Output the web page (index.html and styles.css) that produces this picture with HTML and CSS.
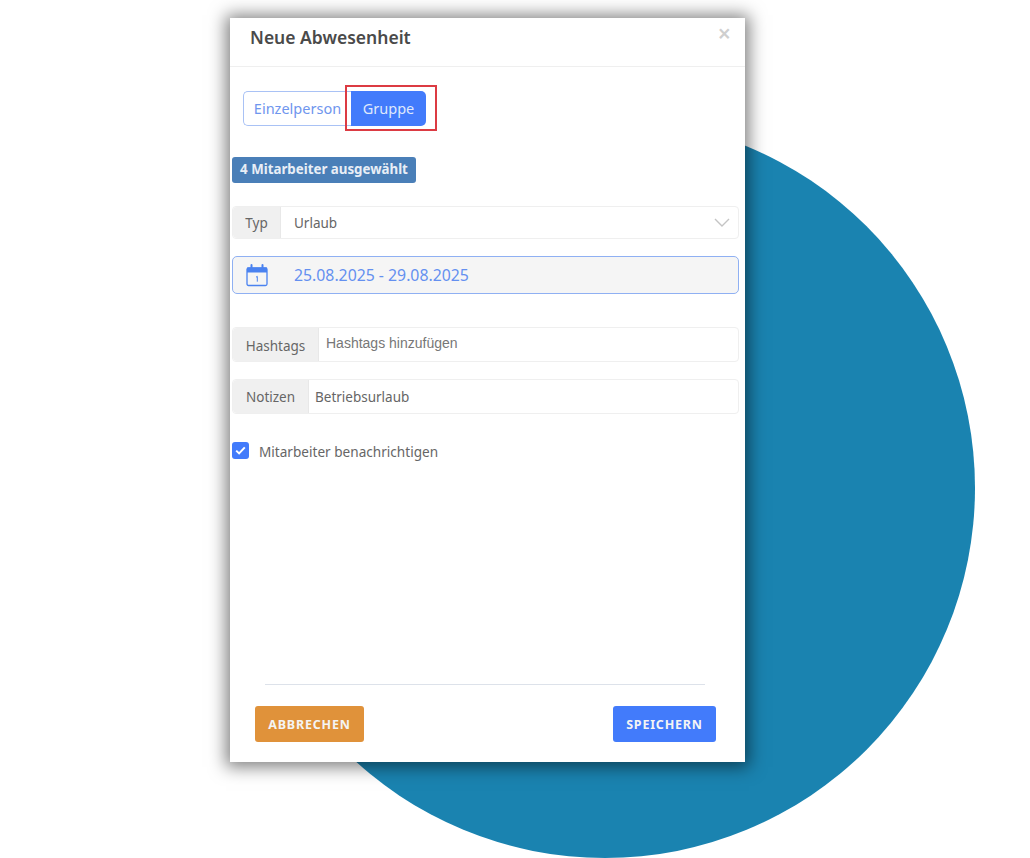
FILE: index.html

```html
<!DOCTYPE html>
<html lang="de">
<head>
    <meta charset="UTF-8">
    <title>Neue Abwesenheit</title>
    <link rel="stylesheet" href="styles.css">
</head>
<body>
    <div class="circle"></div>

    <div class="modal">
        <div class="modal-header">
            <h2>Neue Abwesenheit</h2>
            <span class="close">&times;</span>
        </div>

        <div class="modal-body">
            <div class="switch">
                <button class="switch-btn">Einzelperson</button>
                <button class="switch-btn active">Gruppe</button>
                <span class="highlight"></span>
            </div>

            <div class="badge">4 Mitarbeiter ausgewählt</div>

            <div class="field field-typ">
                <span class="addon addon-typ">Typ</span>
                <span class="value">Urlaub</span>
                <svg class="chevron" width="16" height="9" viewBox="0 0 16 9"><path d="M1 1l7 7 7-7" fill="none" stroke="#c4c4c4" stroke-width="1.4"/></svg>
            </div>

            <div class="date-field">
                <svg class="cal" width="22" height="23" viewBox="0 0 22 23">
                    <path d="M1 3.500h20v5H1z" fill="#4a82f0"/>
                    <rect x="1" y="4" width="20" height="17.500" rx="1.500" fill="none" stroke="#4a82f0" stroke-width="1.300"/>
                    <path d="M5.500 1v4M16.500 1v4" stroke="#4a82f0" stroke-width="2" stroke-linecap="round"/>
                    <path d="M10 13.200l1.300-.8v5.300" fill="none" stroke="#4a82f0" stroke-width="1"/>
                </svg>
                <span class="dates">25.08.2025 - 29.08.2025</span>
            </div>

            <div class="field field-tags">
                <span class="addon addon-tags">Hashtags</span>
                <span class="placeholder">Hashtags hinzufügen</span>
            </div>

            <div class="field field-notes">
                <span class="addon addon-notes">Notizen</span>
                <span class="value-notes">Betriebsurlaub</span>
            </div>

            <div class="check-row">
                <span class="check">
                    <svg width="11" height="9" viewBox="0 0 11 9"><path d="M1.200 4.600l2.900 2.800 5.700-6" fill="none" stroke="#fff" stroke-width="2"/></svg>
                </span>
                <span class="check-label">Mitarbeiter benachrichtigen</span>
            </div>
        </div>

        <div class="modal-footer">
            <button class="btn btn-cancel">ABBRECHEN</button>
            <button class="btn btn-save">SPEICHERN</button>
        </div>
    </div>
</body>
</html>
```

FILE: styles.css

```css
html, body {
    height: 100%;
}

body {
    margin: 0;
    background-color: #fff;
    font-family: "Noto Sans", Arial, sans-serif;
    color: #555;
    overflow: hidden;
    position: relative;
    display: flex;
    flex-direction: column;
    align-items: flex-start;
    padding: 18px 0 0 230px;
    box-sizing: border-box;
}

.circle {
    position: absolute;
    left: 235px;
    top: 118px;
    width: 740px;
    height: 740px;
    border-radius: 50%;
    background-color: #1a83b0;
}

.modal {
    position: relative;
    width: 515px;
    height: 744px;
    background-color: #fff;
    box-shadow: 0 1px 16px 4px rgba(0, 0, 0, 0.5);
    display: flex;
    flex-direction: column;
}

.modal-header {
    height: 48px;
    border-bottom: 1px solid #efefef;
    position: relative;
    padding-left: 20px;
}

.modal-header h2 {
    margin: 0;
    padding-top: 7px;
    font-size: 17.500px;
    line-height: 24px;
    font-weight: 600;
    color: #4a4a4a;
}

.close {
    position: absolute;
    right: 14px;
    top: 3px;
    font-size: 23px;
    line-height: 24px;
    font-weight: 600;
    color: #cfcfcf;
}

.modal-body {
    flex: 1;
    padding: 24px 6px 0 2px;
}

.switch {
    display: flex;
    position: relative;
    margin-left: 11px;
    height: 35px;
}

.switch-btn {
    font-family: inherit;
    font-size: 14.500px;
    color: #6f96ee;
    background-color: #fff;
    border: 1px solid #a9c2f5;
    border-radius: 5px 0 0 5px;
    border-right: none;
    width: 108px;
    padding: 0 0 2px;
}

.switch-btn.active {
    width: 75px;
    color: #dfe8fb;
    background-color: #427bfb;
    border: none;
    border-radius: 0 5px 5px 0;
}

.highlight {
    position: absolute;
    left: 102px;
    top: -6px;
    width: 88px;
    height: 42px;
    border: 2px solid #dc3b43;
}

.badge {
    display: inline-block;
    margin-top: 31px;
    height: 26px;
    line-height: 25px;
    width: 184px;
    text-align: center;
    font-size: 13.300px;
    font-weight: 700;
    color: #e8eef6;
    background-color: #4a7fb8;
    border-radius: 3px;
}

.field {
    display: flex;
    align-items: center;
    border: 1px solid #efefef;
    border-radius: 4px;
    font-size: 13.500px;
    background-color: #fff;
}

.addon {
    align-self: stretch;
    display: flex;
    align-items: center;
    justify-content: center;
    background-color: #f0f0f0;
    border-right: 1px solid #e8e8e8;
    color: #666;
    border-radius: 4px 0 0 4px;
    box-sizing: border-box;
}

.field-typ {
    margin-top: 23px;
    height: 31px;
}

.addon-typ {
    width: 48px;
}

.value {
    margin-left: 13px;
    color: #666;
    flex: 1;
}

.chevron {
    margin-right: 8px;
}

.date-field {
    margin-top: 17px;
    height: 36px;
    display: flex;
    align-items: center;
    border: 1px solid #8fb0f3;
    border-radius: 5px;
    background-color: #f5f5f5;
}

.cal {
    margin-left: 13px;
}

.dates {
    margin-left: 26px;
    font-size: 15.800px;
    color: #6490f0;
}

.field-tags {
    margin-top: 33px;
    height: 33px;
}

.addon-tags {
    width: 86px;
    padding-top: 2px;
}

.placeholder {
    margin: -4px 0 0 7px;
    font-family: "Liberation Sans", Arial, sans-serif;
    font-size: 14px;
    color: #777;
}

.field-notes {
    margin-top: 17px;
    height: 33px;
}

.addon-notes {
    width: 76px;
}

.value-notes {
    margin-left: 6px;
    color: #666;
}

.check-row {
    display: flex;
    align-items: center;
    margin-top: 25px;
}

.check {
    width: 17px;
    height: 17px;
    border-radius: 3px;
    background-color: #427bfb;
    display: flex;
    align-items: center;
    justify-content: center;
}

.check-label {
    margin: 3px 0 0 10px;
    font-size: 13.600px;
    color: #666;
}

.modal-footer {
    margin: 0 29px 20px 25px;
    padding-top: 21px;
    display: flex;
    justify-content: space-between;
    position: relative;
}

.modal-footer::before {
    content: "";
    position: absolute;
    top: -1px;
    left: 10px;
    right: 11px;
    height: 1px;
    background-color: #dde2ea;
}

.btn {
    height: 36px;
    border: none;
    border-radius: 3px;
    font-family: inherit;
    font-size: 12.500px;
    font-weight: 700;
    letter-spacing: 0.8px;
    color: #f4f4f4;
}

.btn-cancel {
    width: 109px;
    background-color: #e0923a;
}

.btn-save {
    width: 103px;
    background-color: #427bfb;
}
```
